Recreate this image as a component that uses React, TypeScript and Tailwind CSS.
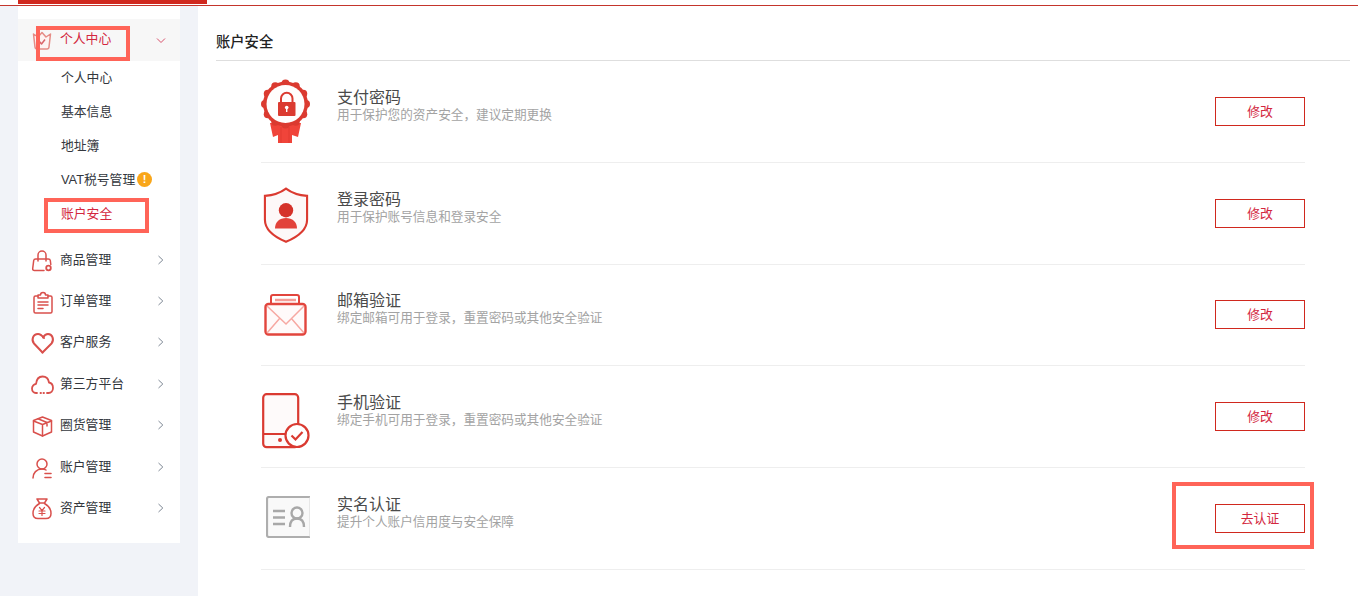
import React from "react";

const font = "font-['Microsoft_YaHei','Liberation_Sans','Noto_Sans_CJK_SC',sans-serif]";

const Chevron = ({ down = false }: { down?: boolean }) => (
  <svg width="12" height="12" viewBox="0 0 12 12" fill="none" stroke={down ? "#d9506a" : "#7d8794"} strokeWidth="1">
    {down ? <path d="M2 4.500l4 4 4-4" /> : <path d="M3.500 2L7.800 6l-4.300 4" />}
  </svg>
);

const MenuIcon = ({ children }: { children: React.ReactNode }) => (
  <svg width="22" height="22" viewBox="0 0 22 22" className="overflow-visible" fill="none" stroke="#d9504c" strokeWidth="1.500" strokeLinejoin="round" strokeLinecap="round">
    {children}
  </svg>
);

const menuItems: { label: string; icon: React.ReactNode }[] = [
  {
    label: "商品管理",
    icon: (
      <MenuIcon>
        <path d="M7 12V6a4 4 0 018 0v6" />
        <path d="M13 21.500H3.500q-2 0-1.800-2l1-8q.2-1.500 2-1.500h12.600q1.800 0 2 1.500l.5 4" />
        <circle cx="17.500" cy="19" r="2.300" strokeWidth="1.800" />
      </MenuIcon>
    ),
  },
  {
    label: "订单管理",
    icon: (
      <MenuIcon>
        <path d="M7 6H4.500q-1.500 0-1.500 1.500v14q0 1.500 1.500 1.500h15q1.500 0 1.500-1.500v-14Q21 6 19.500 6H17" />
        <path d="M7 8V5h2.500a2.500 2.500 0 015 0H17v3z" />
        <path d="M7 12h10M7 15h10M7 18.500h5" />
      </MenuIcon>
    ),
  },
  {
    label: "客户服务",
    icon: (
      <MenuIcon>
        <path d="M11.500 21.500L3 12.500C0 9 2 3 7 3c2.500 0 4 1.500 6 4" strokeWidth="2" />
        <path d="M12 6.500C13.500 4 15.500 3 17 3c4.500 0 6.500 6 3.500 9.500l-9 9" strokeWidth="2" />
      </MenuIcon>
    ),
  },
  {
    label: "第三方平台",
    icon: (
      <MenuIcon>
        <path d="M6 20H5C2.500 20 1 18 1 15.500 1 13 3 11 5 11 5.500 6.500 8 3.500 11.500 3.500 15 3.500 17.500 6 18 9.500c2.500 .5 4 3 4 5.500 0 3-2 5-4.500 5H16" strokeWidth="1.800" />
        <path d="M9.500 20h.5M12.500 20h.5" strokeWidth="1.800" />
      </MenuIcon>
    ),
  },
  {
    label: "圈货管理",
    icon: (
      <MenuIcon>
        <path d="M11.500 3l9 3.500v11.500l-9 4-9-4V6.500z" />
        <path d="M2.500 7l9 3.500 9-3.500M11.500 10.500v11.500M7 4.800l9 3.700v3.500" />
      </MenuIcon>
    ),
  },
  {
    label: "账户管理",
    icon: (
      <MenuIcon>
        <circle cx="11" cy="8" r="5" />
        <path d="M2 22c0-5 3.500-9 9-9 1.500 0 3 .3 4 1" />
        <path d="M14 17.500h6M14 21.500h6" strokeWidth="1.600" />
      </MenuIcon>
    ),
  },
  {
    label: "资产管理",
    icon: (
      <MenuIcon>
        <path d="M6 2h10l-2.500 4h-5z" />
        <path d="M8.500 6.500C4 9 2 13 2 16.500c0 3 2 5 5 5h8c3 0 5-2 5-5 0-3.500-2-7.500-6.500-10" />
        <path d="M8.500 10.500l2.500 3 2.500-3M8 14h6M8 16.500h6M11 13.500v5" strokeWidth="1.200" />
      </MenuIcon>
    ),
  },
];

const subItems = ["个人中心", "基本信息", "地址簿"];

const bumps = [0, 30, 60, 90, 120, 150, 180, 210, 240, 270, 300, 330];

const PayIcon = () => (
  <svg width="50" height="64" viewBox="0 0 50 64">
    <path d="M9 44l3 14 5-2v8h14v-8l6 2 3-14z" fill="#f0443a" />
    <path d="M20 48v16M28 48v16" stroke="#e23a31" strokeWidth="1" />
    <circle cx="24.500" cy="25" r="22.500" fill="#db3a30" />
    {bumps.map((a) => (
      <circle
        key={a}
        cx={24.5 + 20.5 * Math.cos((a * Math.PI) / 180)}
        cy={25 + 20.5 * Math.sin((a * Math.PI) / 180)}
        r="4"
        fill="#db3a30"
      />
    ))}
    <circle cx="24.500" cy="25" r="19" fill="#fffdfd" />
    <rect x="17" y="23" width="17.500" height="14" rx="1" fill="#db3a30" />
    <path d="M20 23v-3.500a5.700 5.700 0 0111.500 0V23" fill="none" stroke="#db3a30" strokeWidth="2" />
    <circle cx="25.700" cy="28.500" r="1.800" fill="#fff" />
    <rect x="25" y="29" width="1.400" height="4" fill="#fff" />
  </svg>
);

const ShieldIcon = () => (
  <svg width="46" height="58" viewBox="0 0 48 58" className="ml-[2px] mt-[3px]">
    <path d="M24 1.500C18 6 10 8.500 2 9v25c0 10 10 18 22 23 12-5 22-13 22-23V9c-8-.5-16-3-22-7.500z" fill="#fdf8f8" stroke="#db3a30" strokeWidth="2.200" />
    <circle cx="24" cy="24" r="7.500" fill="#d5322a" />
    <path d="M12.500 43c0-7 5-11 11.500-11s11.500 4 11.500 11z" fill="#e2423a" />
  </svg>
);

const MailIcon = () => (
  <svg width="44" height="42" viewBox="0 0 44 42" className="ml-[3px]">
    <path d="M7 10V3q0-2 2-2h24q2 0 2 2v7" fill="#fff" stroke="#e2453d" strokeWidth="2" />
    <path d="M11 6h21" stroke="#f59c96" strokeWidth="2.500" />
    <rect x="1.500" y="10" width="40" height="30.500" rx="3" fill="#fffafa" stroke="#e2453d" strokeWidth="2.400" />
    <path d="M3 12l19 18 18-18M3 39l13-15M40 39L27 24" fill="none" stroke="#f7a8a2" strokeWidth="1.500" />
  </svg>
);

const PhoneIcon = () => (
  <svg width="48" height="56" viewBox="0 0 48 56" className="ml-[1px] mt-[9px]">
    <rect x="1.200" y="1.200" width="35" height="53" rx="3.500" fill="#fefafa" stroke="#da3a31" strokeWidth="2.200" />
    <path d="M1.200 41h35" stroke="#da3a31" strokeWidth="1.800" />
    <circle cx="18" cy="47" r="2" fill="#da3a31" />
    <circle cx="35" cy="42.500" r="11.500" fill="#fff" stroke="#da3a31" strokeWidth="2.200" />
    <path d="M29.500 42.500l4 4 7-7.500" fill="none" stroke="#da3a31" strokeWidth="2.200" />
  </svg>
);

const IdIcon = () => (
  <svg width="44" height="42" viewBox="0 0 44 42" className="mb-[2px] ml-[5px]">
    <rect x="1" y="1" width="43" height="40" rx="2" fill="#f9f9f9" />
    <path d="M44 1H3Q1 1 1 3v36q0 2 2 2h41" fill="none" stroke="#aeaeae" strokeWidth="2.200" />
    <path d="M44 1v40" stroke="#d4d4d4" strokeWidth="1" />
    <path d="M7 15h12M7 21.500h12M7 28h12" stroke="#a8a8a8" strokeWidth="2.400" />
    <circle cx="31" cy="17" r="5.500" fill="none" stroke="#a8a8a8" strokeWidth="2.400" />
    <path d="M24 31c0-6 3-8.500 7-8.500s7 2.500 7 8.500" fill="none" stroke="#a8a8a8" strokeWidth="2.400" />
  </svg>
);

const rows = [
  { icon: <PayIcon />, title: "支付密码", desc: "用于保护您的资产安全，建议定期更换", action: "修改" },
  { icon: <ShieldIcon />, title: "登录密码", desc: "用于保护账号信息和登录安全", action: "修改" },
  { icon: <MailIcon />, title: "邮箱验证", desc: "绑定邮箱可用于登录，重置密码或其他安全验证", action: "修改" },
  { icon: <PhoneIcon />, title: "手机验证", desc: "绑定手机可用于登录，重置密码或其他安全验证", action: "修改" },
  { icon: <IdIcon />, title: "实名认证", desc: "提升个人账户信用度与安全保障", action: "去认证" },
];

export default function App() {
  return (
    <div className={`relative h-[596px] w-[1358px] overflow-hidden bg-white ${font}`}>
      {/* top bar */}
      <div className="h-[6px] border-b border-[#c4352c]">
        <div className="ml-[18px] h-[4px] w-[189px] bg-[#d0281e]" />
      </div>

      <div className="flex h-[590px]">
        {/* Sidebar */}
        <aside className="h-full w-[198px] shrink-0 bg-[#f1f3f8] pl-[18px] pt-0">
          <div className="h-[537px] w-[162px] bg-white pt-[13px]">
            <div className="flex h-[42px] items-center bg-[#f7f7f7] pl-[14px] pr-[13px]">
              <svg width="20" height="20" viewBox="0 0 20 20" fill="#fdf3f2" stroke="#e58c86" strokeWidth="1.500" strokeLinejoin="round" className="mt-[2px]">
                <path d="M1.500 3L6 6l4-4.500L14 6l4.500-3-1.500 13q-.2 2-2 2H5q-1.800 0-2-2z" />
                <path d="M7 10l2.500 3L13 8.500" stroke="#d9646a" fill="none" />
              </svg>
              <span className="mb-[2px] ml-[8px] text-[12.800px] text-[#d3273e]">个人中心</span>
              <span className="ml-auto flex"><Chevron down /></span>
            </div>
            <ul className="pl-[43px] text-[12.800px] text-[#33373d]">
              {subItems.map((s) => (
                <li key={s} className="flex h-[34px] items-center">{s}</li>
              ))}
              <li className="flex h-[34px] items-center pb-[1px]">
                VAT税号管理
                <span className="ml-[2px] flex h-[15px] w-[15px] items-center justify-center rounded-full bg-[#f9a61a] text-[11px] font-bold leading-none text-white">!</span>
              </li>
              <li className="flex h-[34px] items-center text-[#d3273e]">账户安全</li>
            </ul>
            <ul className="mt-[8px]">
              {menuItems.map((m) => (
                <li key={m.label} className="flex h-[41.400px] items-center pl-[13px] pr-[13px]">
                  <span className="flex w-[22px]">{m.icon}</span>
                  <span className="mb-[1px] ml-[7px] text-[12.800px] text-[#33373d]">{m.label}</span>
                  <span className="ml-auto flex"><Chevron /></span>
                </li>
              ))}
            </ul>
          </div>
        </aside>

        {/* Main */}
        <main className="min-w-0 flex-1 pl-[18px] pr-[8px]">
          <div className="flex h-[55px] items-center border-b border-[#dedede] pt-[19px] text-[14.300px] font-medium text-[#222]">
            账户安全
          </div>
          <div className="pl-[45px] pr-[45px]">
            {rows.map((r) => (
              <div key={r.title} className="flex h-[101.750px] items-center border-b border-[#eeeeee]">
                <div className="flex w-[76px] items-center">{r.icon}</div>
                <div className="flex-1 pb-[10px]">
                  <div className="text-[16px] leading-[18px] text-[#4a4a4a]">{r.title}</div>
                  <div className="text-[12.650px] leading-[17px] text-[#a3a3a3]">{r.desc}</div>
                </div>
                <button className="h-[29px] w-[90px] border border-[#d0281e] bg-white text-[12.800px] text-[#d3273e]">
                  {r.action}
                </button>
              </div>
            ))}
          </div>
        </main>
      </div>

      {/* annotation marks */}
      <div className="absolute left-[36px] top-[26px] h-[35px] w-[94px] border-4 border-[#ff6458]" />
      <div className="absolute left-[44px] top-[198px] h-[35px] w-[105px] border-4 border-[#ff6458]" />
      <div className="absolute left-[1172px] top-[482px] h-[67px] w-[142px] border-4 border-[#ff6458]" />
    </div>
  );
}
